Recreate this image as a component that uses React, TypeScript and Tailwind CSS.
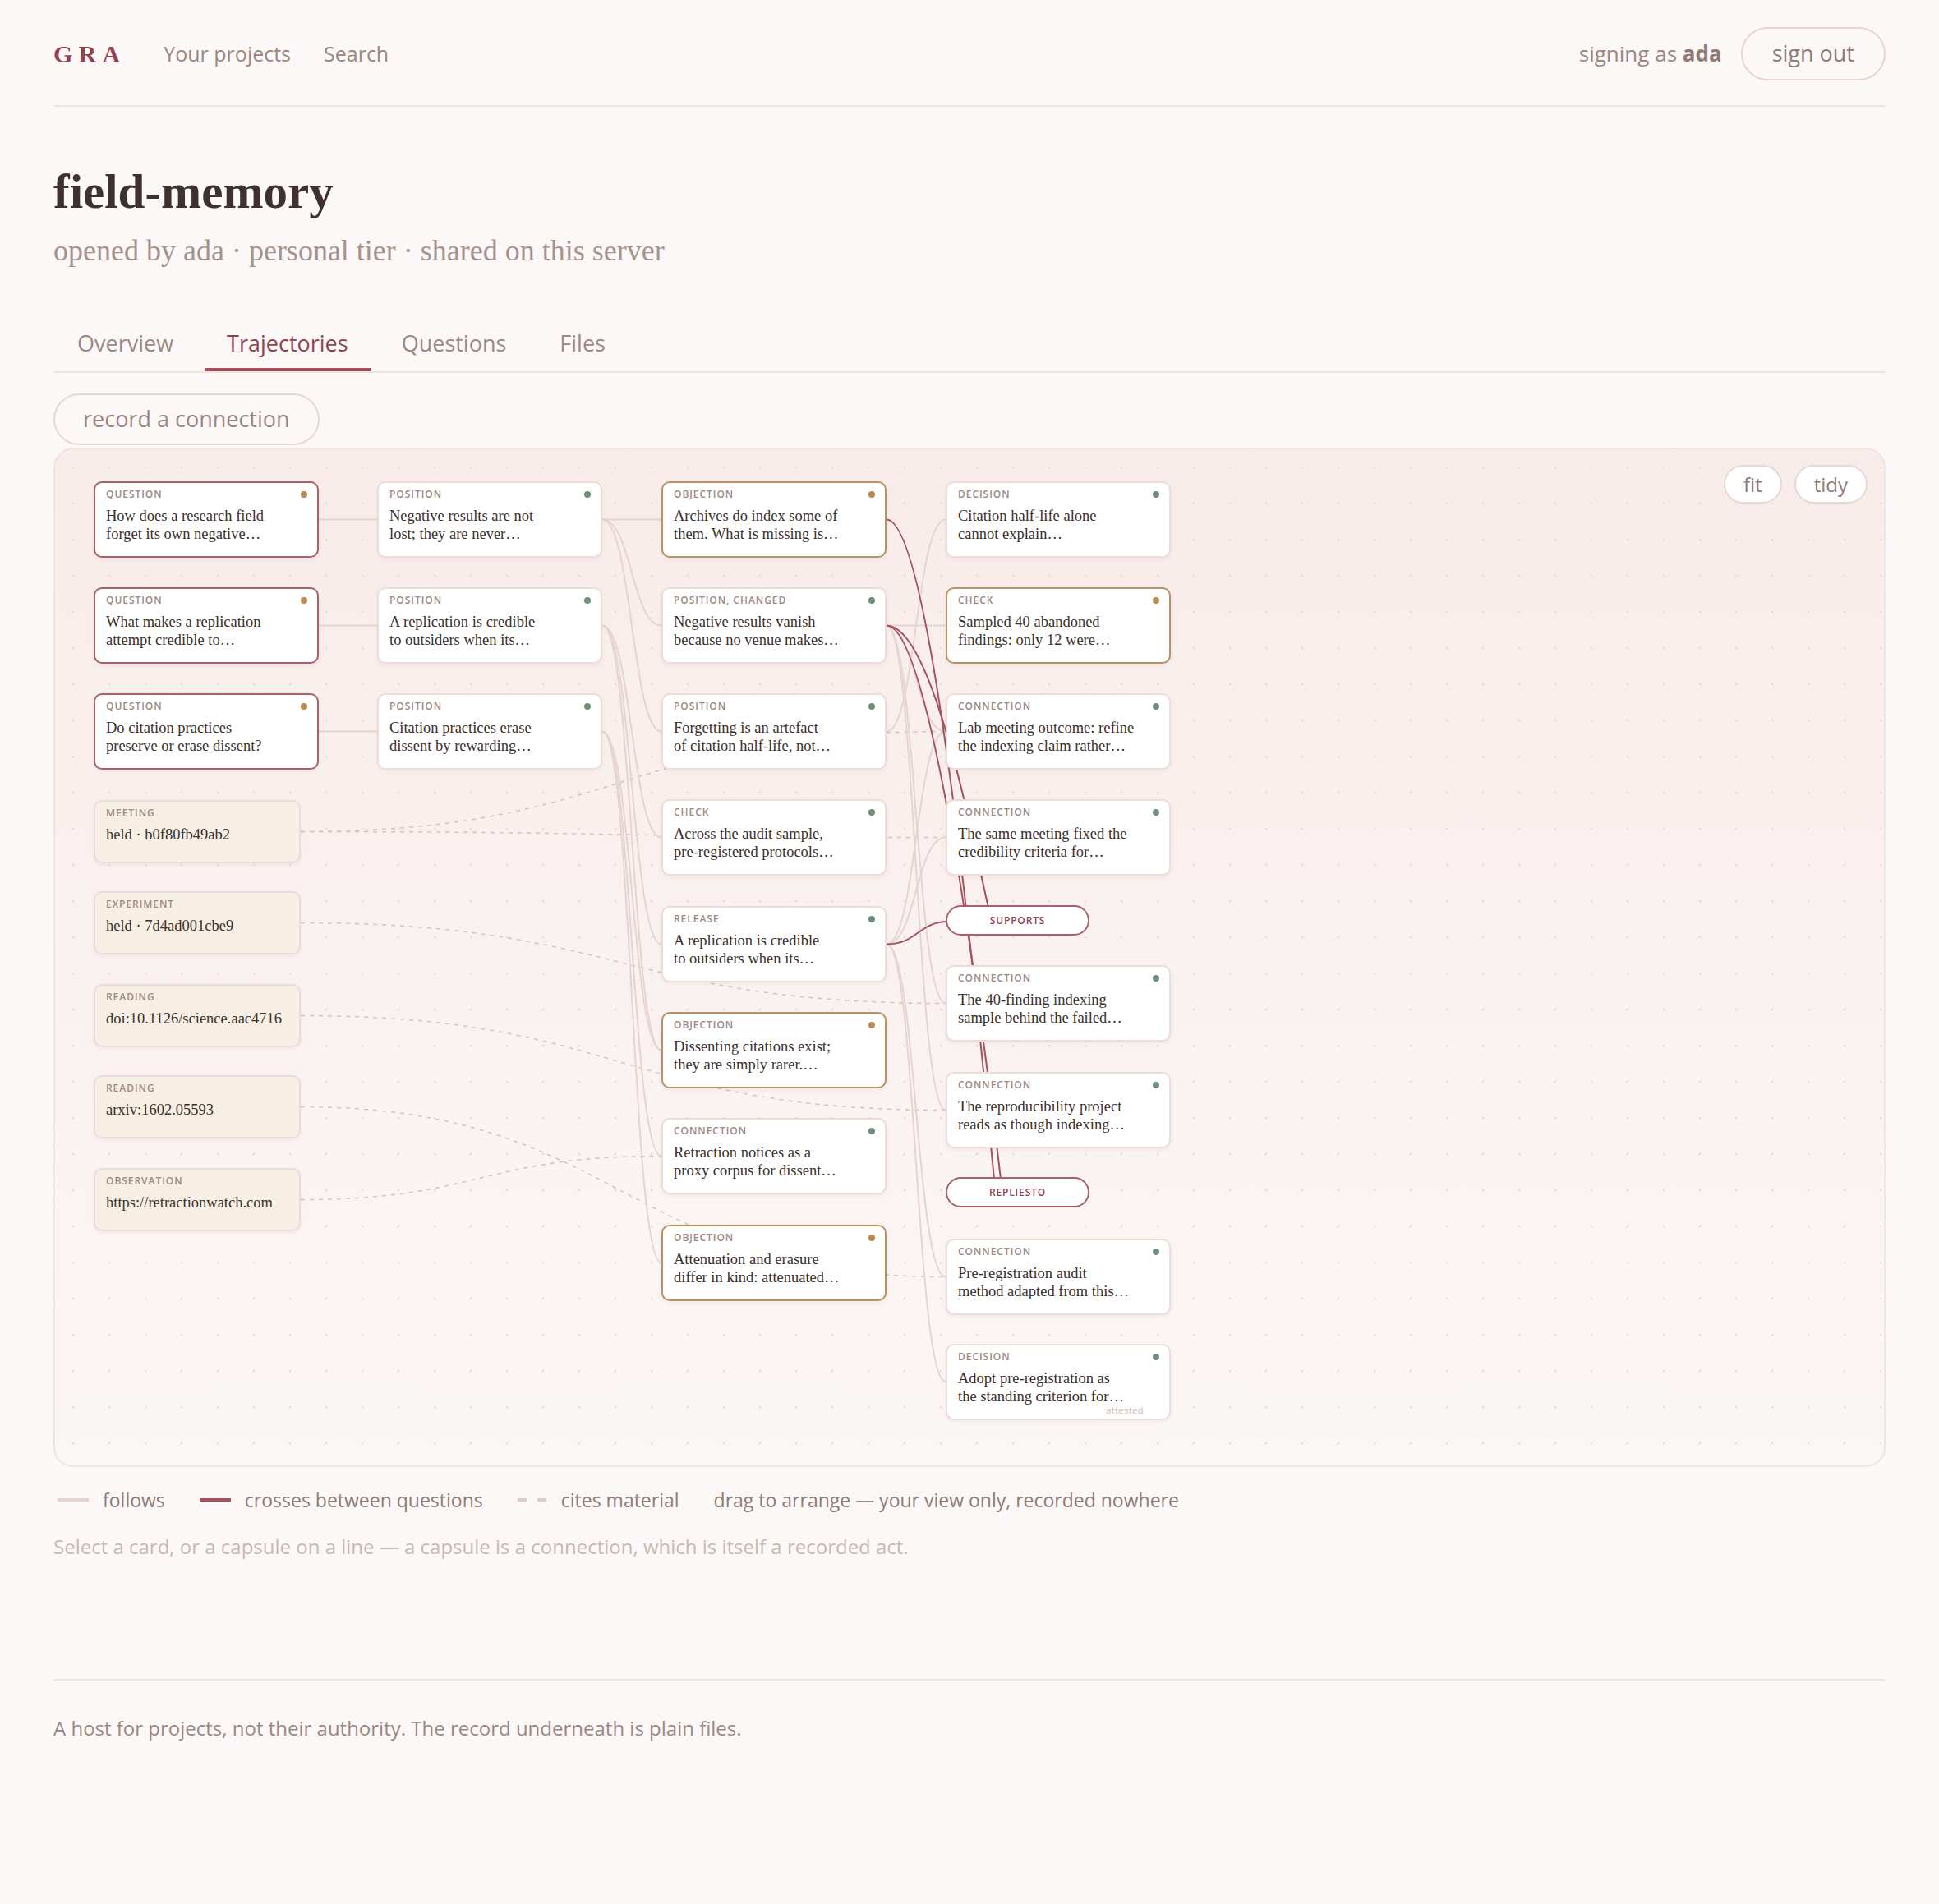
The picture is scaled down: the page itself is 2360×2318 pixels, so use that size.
import type { ReactNode } from 'react';

type Tone = 'question' | 'gold' | 'plain' | 'material';

type Card = {
  id: string;
  x: number;
  y: number;
  w: number;
  h: number;
  label: string;
  lines: string[];
  tone: Tone;
  dot?: 'amber' | 'green';
  attested?: boolean;
};

type Capsule = { id: string; x: number; y: number; label: string };

const CARD_W = 274;
const CARD_H = 93;
const MAT_W = 252;
const MAT_H = 77;
const COL = [47, 392, 738, 1084];
const row = (i: number) => Math.round(38.5 + 129.3 * i);

function card(
  id: string,
  col: number,
  y: number,
  label: string,
  lines: string[],
  tone: Tone,
  dot: 'amber' | 'green',
  attested = false,
): Card {
  return { id, x: COL[col], y, w: CARD_W, h: CARD_H, label, lines, tone, dot, attested };
}

function material(id: string, y: number, label: string, text: string): Card {
  return { id, x: COL[0], y, w: MAT_W, h: MAT_H, label, lines: [text], tone: 'material' };
}

const CARDS: Card[] = [
  card('q1', 0, row(0), 'Question', ['How does a research field', 'forget its own negative…'], 'question', 'amber'),
  card('q2', 0, row(1), 'Question', ['What makes a replication', 'attempt credible to…'], 'question', 'amber'),
  card('q3', 0, row(2), 'Question', ['Do citation practices', 'preserve or erase dissent?'], 'question', 'amber'),

  material('m1', 427, 'Meeting', 'held · b0f80fb49ab2'),
  material('m2', 538, 'Experiment', 'held · 7d4ad001cbe9'),
  material('m3', 651, 'Reading', 'doi:10.1126/science.aac4716'),
  material('m4', 762, 'Reading', 'arxiv:1602.05593'),
  material('m5', 875, 'Observation', 'https://retractionwatch.com'),

  card('p1', 1, row(0), 'Position', ['Negative results are not', 'lost; they are never…'], 'plain', 'green'),
  card('p2', 1, row(1), 'Position', ['A replication is credible', 'to outsiders when its…'], 'plain', 'green'),
  card('p3', 1, row(2), 'Position', ['Citation practices erase', 'dissent by rewarding…'], 'plain', 'green'),

  card('obj1', 2, row(0), 'Objection', ['Archives do index some of', 'them. What is missing is…'], 'gold', 'amber'),
  card('pc', 2, row(1), 'Position, changed', ['Negative results vanish', 'because no venue makes…'], 'plain', 'green'),
  card('pf', 2, row(2), 'Position', ['Forgetting is an artefact', 'of citation half-life, not…'], 'plain', 'green'),
  card('ck', 2, row(3), 'Check', ['Across the audit sample,', 'pre-registered protocols…'], 'plain', 'green'),
  card('rel', 2, row(4), 'Release', ['A replication is credible', 'to outsiders when its…'], 'plain', 'green'),
  card('obj2', 2, row(5), 'Objection', ['Dissenting citations exist;', 'they are simply rarer.…'], 'gold', 'amber'),
  card('cx', 2, row(6), 'Connection', ['Retraction notices as a', 'proxy corpus for dissent…'], 'plain', 'green'),
  card('obj3', 2, row(7), 'Objection', ['Attenuation and erasure', 'differ in kind: attenuated…'], 'gold', 'amber'),

  card('dec1', 3, row(0), 'Decision', ['Citation half-life alone', 'cannot explain…'], 'plain', 'green'),
  card('chk', 3, row(1), 'Check', ['Sampled 40 abandoned', 'findings: only 12 were…'], 'gold', 'amber'),
  card('cn1', 3, row(2), 'Connection', ['Lab meeting outcome: refine', 'the indexing claim rather…'], 'plain', 'green'),
  card('cn2', 3, row(3), 'Connection', ['The same meeting fixed the', 'credibility criteria for…'], 'plain', 'green'),
  card('cn3', 3, 628, 'Connection', ['The 40-finding indexing', 'sample behind the failed…'], 'plain', 'green'),
  card('cn4', 3, 758, 'Connection', ['The reproducibility project', 'reads as though indexing…'], 'plain', 'green'),
  card('cn5', 3, 961, 'Connection', ['Pre-registration audit', 'method adapted from this…'], 'plain', 'green'),
  card('dec2', 3, 1089, 'Decision', ['Adopt pre-registration as', 'the standing criterion for…'], 'plain', 'green', true),
];

const CAPSULES: Capsule[] = [
  { id: 'supports', x: COL[3], y: 555, label: 'Supports' },
  { id: 'repliesto', x: COL[3], y: 886, label: 'RepliesTo' },
];

const byId = Object.fromEntries(CARDS.map((c) => [c.id, c]));

const right = (c: Card): [number, number] => [c.x + c.w, c.y + c.h / 2];
const left = (c: Card): [number, number] => [c.x, c.y + c.h / 2];

// horizontal-tangent bezier between two anchors
function link(a: [number, number], b: [number, number]) {
  const k = Math.max((b[0] - a[0]) / 2, 24);
  return `M${a[0]} ${a[1]} C${a[0] + k} ${a[1]} ${b[0] - k} ${b[1]} ${b[0]} ${b[1]}`;
}

// leaves a card sideways, lands on top of a capsule
function drop(a: [number, number], b: [number, number]) {
  return `M${a[0]} ${a[1]} C${a[0] + 56} ${a[1]} ${b[0] - 20} ${a[1] + (b[1] - a[1]) * 0.75} ${b[0]} ${b[1]}`;
}

const FOLLOWS: [string, string][] = [
  ['q1', 'p1'],
  ['q2', 'p2'],
  ['q3', 'p3'],
  ['p1', 'obj1'],
  ['p1', 'pc'],
  ['p1', 'pf'],
  ['p2', 'ck'],
  ['p2', 'rel'],
  ['p2', 'obj2'],
  ['p3', 'obj2'],
  ['p3', 'cx'],
  ['p3', 'obj3'],
  ['pf', 'dec1'],
  ['pc', 'chk'],
  ['pc', 'cn1'],
  ['rel', 'cn1'],
  ['rel', 'cn2'],
  ['pc', 'cn3'],
  ['pc', 'cn4'],
  ['rel', 'cn5'],
  ['rel', 'dec2'],
];

const CITES: [string, string][] = [
  ['m1', 'cn1'],
  ['m1', 'cn2'],
  ['m2', 'cn3'],
  ['m3', 'cn4'],
  ['m4', 'cn5'],
  ['m5', 'cx'],
];

function Edges() {
  const sup = CAPSULES[0];
  const rep = CAPSULES[1];
  const crosses = [
    drop(right(byId.obj1), [sup.x + 59, rep.y + 2]),
    drop(right(byId.pc), [sup.x + 67, rep.y + 2]),
    drop(right(byId.pc), [sup.x + 52, sup.y + 3]),
    link(right(byId.rel), [sup.x + 4, sup.y + 20]),
  ];
  return (
    <svg className="absolute left-0 top-0" width={2226} height={1237}>
      <g fill="none" stroke="#d5c3be" strokeWidth={1.5} strokeDasharray="5 6">
        {CITES.map(([a, b]) => (
          <path key={a + b} d={link(right(byId[a]), left(byId[b]))} />
        ))}
      </g>
      <g fill="none" stroke="#e5d4d0" strokeWidth={2}>
        {FOLLOWS.map(([a, b]) => (
          <path key={a + b} d={link(right(byId[a]), left(byId[b]))} />
        ))}
      </g>
      <g fill="none" stroke="#a4525f" strokeWidth={2}>
        {crosses.map((d) => (
          <path key={d} d={d} />
        ))}
      </g>
    </svg>
  );
}

const TONE: Record<Tone, string> = {
  question: 'border-[#a9606b] bg-white',
  gold: 'border-[#b99262] bg-white',
  plain: 'border-[#eedcd8] bg-white',
  material: 'border-[#ecdbd6] bg-[#f7efe4]',
};

function CardView({ c }: { c: Card }) {
  return (
    <div
      className={`absolute rounded-[10px] border-2 pl-[13px] pr-[12px] pt-[6px] shadow-[0_2px_5px_rgba(140,90,80,0.08)] ${TONE[c.tone]}`}
      style={{ left: c.x, top: c.y, width: c.w, height: c.h }}
    >
      <div className="flex h-[16px] items-center justify-between">
        <span className="text-[12px] font-semibold uppercase tracking-[0.08em] text-[#9d8883]">
          {c.label}
        </span>
        {c.dot && (
          <span
            className={`size-[8px] rounded-full ${c.dot === 'amber' ? 'bg-[#b98b52]' : 'bg-[#6f8f79]'}`}
          />
        )}
      </div>
      <div className="mt-[7px] whitespace-nowrap font-['Liberation_Serif',serif] text-[18.5px] leading-[22px] text-[#3b2f2c]">
        {c.lines.map((l) => (
          <div key={l}>{l}</div>
        ))}
      </div>
      {c.attested && (
        <span className="absolute bottom-[2px] right-[31px] text-[11px] tracking-[0.04em] text-[#cdbcb7]">
          attested
        </span>
      )}
    </div>
  );
}

function CapsuleView({ c }: { c: Capsule }) {
  return (
    <div
      className="absolute flex items-center justify-center rounded-full border-2 border-[#a9606b] bg-white text-[12px] font-semibold uppercase tracking-[0.07em] text-[#8f4351]"
      style={{ left: c.x, top: c.y, width: 175, height: 37 }}
    >
      {c.label}
    </div>
  );
}

function PillButton({ children }: { children: ReactNode }) {
  return (
    <button className="h-[47px] rounded-full border-2 border-[#e8d7d3] bg-white px-[22px] text-[24px] text-[#8e7a75]">
      {children}
    </button>
  );
}

function Canvas() {
  return (
    <div className="relative mt-[3px] h-[1241px] overflow-hidden rounded-[24px] border-2 border-[#f1e5e2] bg-linear-to-b from-[#f8ecea] to-[#fbf7f6]">
      <div className="absolute inset-0 bg-[radial-gradient(circle,#ecdcd8_1.2px,transparent_1.7px)] bg-[length:44px_44px]" />
      <Edges />
      {CARDS.map((c) => (
        <CardView key={c.id} c={c} />
      ))}
      {CAPSULES.map((c) => (
        <CapsuleView key={c.id} c={c} />
      ))}
      <div className="absolute right-[20px] top-[19px] flex gap-[15px]">
        <PillButton>fit</PillButton>
        <PillButton>tidy</PillButton>
      </div>
    </div>
  );
}

function Header() {
  return (
    <header className="flex items-center justify-between border-b-2 border-[#efe3e0] pb-[30px] pt-[33px]">
      <div className="flex items-center">
        <span className="font-['Liberation_Serif',serif] text-[30px] font-bold tracking-[0.24em] text-[#8f4351]">
          GRA
        </span>
        <nav className="ml-[46px] flex gap-[40px] text-[25px]">
          <a>Your projects</a>
          <a>Search</a>
        </nav>
      </div>
      <div className="flex items-center gap-[23px]">
        <span className="text-[26px]">
          signing as <b className="font-bold text-[#8e7b76]">ada</b>
        </span>
        <button className="h-[65px] rounded-full border-2 border-[#e6d5d1] px-[36px] text-[27px] font-medium text-[#8e7b76]">
          sign out
        </button>
      </div>
    </header>
  );
}

const TABS = ['Overview', 'Trajectories', 'Questions', 'Files'];

function Tabs() {
  return (
    <div className="mt-[75px] flex gap-[11px] border-b-2 border-[#efe3e0] pl-[2px]">
      {TABS.map((t) => {
        const active = t === 'Trajectories';
        return (
          <button
            key={t}
            className={`border-b-4 px-[27px] pb-[12px] text-[27px] font-medium leading-[36px] ${
              active ? 'border-[#a5515f] text-[#8f4351]' : 'border-transparent text-[#9d8984]'
            }`}
          >
            {t}
          </button>
        );
      })}
    </div>
  );
}

function Legend() {
  return (
    <div className="mt-[24px] flex items-center gap-[42px] pl-[5px] text-[23px] leading-[32px] text-[#8f7b76]">
      <span className="flex items-center gap-[17px]">
        <span className="h-[4px] w-[38px] bg-[#e3d2cd]" />
        follows
      </span>
      <span className="flex items-center gap-[17px]">
        <span className="h-[4px] w-[38px] bg-[#a3535f]" />
        crosses between questions
      </span>
      <span className="flex items-center gap-[17px]">
        <svg width={36} height={4}>
          <line x1={0} y1={2} x2={36} y2={2} stroke="#dccbc6" strokeWidth={4} strokeDasharray="11 13" />
        </svg>
        cites material
      </span>
      <span>drag to arrange — your view only, recorded nowhere</span>
    </div>
  );
}

export default function App() {
  return (
    <div className="min-h-screen bg-[#fcf8f7] px-[65px] font-['Open_Sans',sans-serif] text-[#9b8782]">
      <Header />
      <main>
        <h1 className="mt-[74px] font-['Liberation_Serif',serif] text-[59px] font-bold leading-none text-[#3e312e]">
          field-memory
        </h1>
        <p className="mt-[22px] font-['Liberation_Serif',serif] text-[36px] leading-[40px] text-[#a6928d]">
          opened by ada · personal tier · shared on this server
        </p>
        <Tabs />
        <button className="mt-[25px] h-[63px] rounded-full border-2 border-[#e8d8d4] px-[34px] text-[27px] font-medium text-[#9b8782]">
          record a connection
        </button>
        <Canvas />
        <Legend />
        <p className="mt-[25px] text-[24px] leading-[32px] text-[#c9b8b3]">
          Select a card, or a capsule on a line — a capsule is a connection, which is itself a recorded act.
        </p>
      </main>
      <footer className="mt-[145px] border-t-2 border-[#efe3e0] pt-[42px] text-[24px] leading-[32px] text-[#9b8782]">
        A host for projects, not their authority. The record underneath is plain files.
      </footer>
    </div>
  );
}
